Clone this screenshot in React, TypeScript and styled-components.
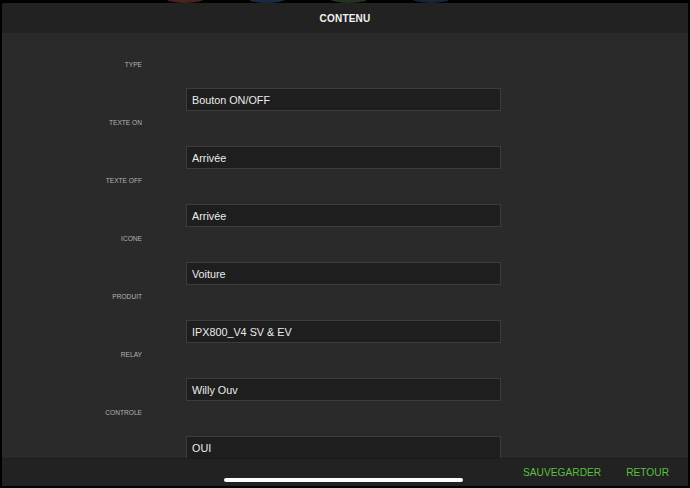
import styled, { createGlobalStyle } from 'styled-components'

const GlobalStyle = createGlobalStyle`
  html, body {
    margin: 0;
    padding: 0;
    background: #000;
  }
  body {
    font-family: "Liberation Sans", Arial, sans-serif;
  }
`

const fields = [
  { label: 'TYPE', value: 'Bouton ON/OFF' },
  { label: 'TEXTE ON', value: 'Arrivée' },
  { label: 'TEXTE OFF', value: 'Arrivée' },
  { label: 'ICONE', value: 'Voiture' },
  { label: 'PRODUIT', value: 'IPX800_V4 SV & EV' },
  { label: 'RELAY', value: 'Willy Ouv' },
  { label: 'CONTROLE', value: 'OUI' },
]

// app icons peeking out behind the modal sheet
const blobs = ['#4a231d', '#1a2c44', '#243322', '#18243a']

export default function App() {
  return (
    <>
      <GlobalStyle />
      <Screen>
        <BehindStrip>
          {blobs.map((c, i) => <Blob key={i} $color={c} />)}
        </BehindStrip>
        <Sheet>
          <Header>CONTENU</Header>
          <Content>
            {fields.map(f => (
              <Field key={f.label}>
                <Label>{f.label}</Label>
                <Input>{f.value}</Input>
              </Field>
            ))}
          </Content>
          <Footer>
            <Action>SAUVEGARDER</Action>
            <Action>RETOUR</Action>
          </Footer>
        </Sheet>
        <HomeIndicator />
      </Screen>
    </>
  )
}

const Screen = styled.div`
  position: relative;
  width: 690px;
  height: 488px;
  background: #000;
  padding: 3px 2px 2px 2px;
  box-sizing: border-box;
  overflow: hidden;
`

const BehindStrip = styled.div`
  position: absolute;
  top: -9px;
  left: 164px;
  display: flex;
  gap: 40px;
`

const Blob = styled.div<{ $color: string }>`
  width: 42px;
  height: 12px;
  border-radius: 50%;
  background: ${p => p.$color};
`

const Sheet = styled.div`
  position: relative;
  height: 100%;
  display: flex;
  flex-direction: column;
  background: #2a2a2a;
  border-radius: 2px 2px 0 0;
  overflow: hidden;
`

const Header = styled.div`
  flex: 0 0 30px;
  display: flex;
  align-items: center;
  justify-content: center;
  background: #222222;
  color: #f2f2f2;
  font-size: 10px;
  font-weight: bold;
  letter-spacing: 0.2px;
`

const Content = styled.div`
  flex: 1;
  overflow: hidden;
  padding-top: 26px;
  display: flex;
  flex-direction: column;
`

const Field = styled.div`
  display: flex;
  flex-direction: column;
  flex-shrink: 0;
  margin-bottom: 6px;
`

const Label = styled.div`
  width: 140px;
  height: 12px;
  line-height: 12px;
  margin-bottom: 17px;
  text-align: right;
  color: #b4b4b4;
  font-size: 6.6px;
`

const Input = styled.div`
  margin-left: 184px;
  width: 315px;
  height: 23px;
  box-sizing: border-box;
  display: flex;
  align-items: center;
  padding-left: 5px;
  background: #1e1e1e;
  border: 1px solid #3c3c3c;
  color: #ececec;
  font-size: 10.8px;
`

const Footer = styled.div`
  flex: 0 0 28px;
  display: flex;
  align-items: flex-start;
  justify-content: flex-end;
  gap: 25px;
  padding: 8px 19px 0 0;
  box-sizing: border-box;
  background: #222222;
  border-top: 1px solid #1c1c1c;
`

const Action = styled.span`
  color: #5bbf3f;
  font-size: 10.2px;
`

const HomeIndicator = styled.div`
  position: absolute;
  left: 224px;
  top: 478px;
  width: 239px;
  height: 4px;
  border-radius: 2px;
  background: #fff;
`
